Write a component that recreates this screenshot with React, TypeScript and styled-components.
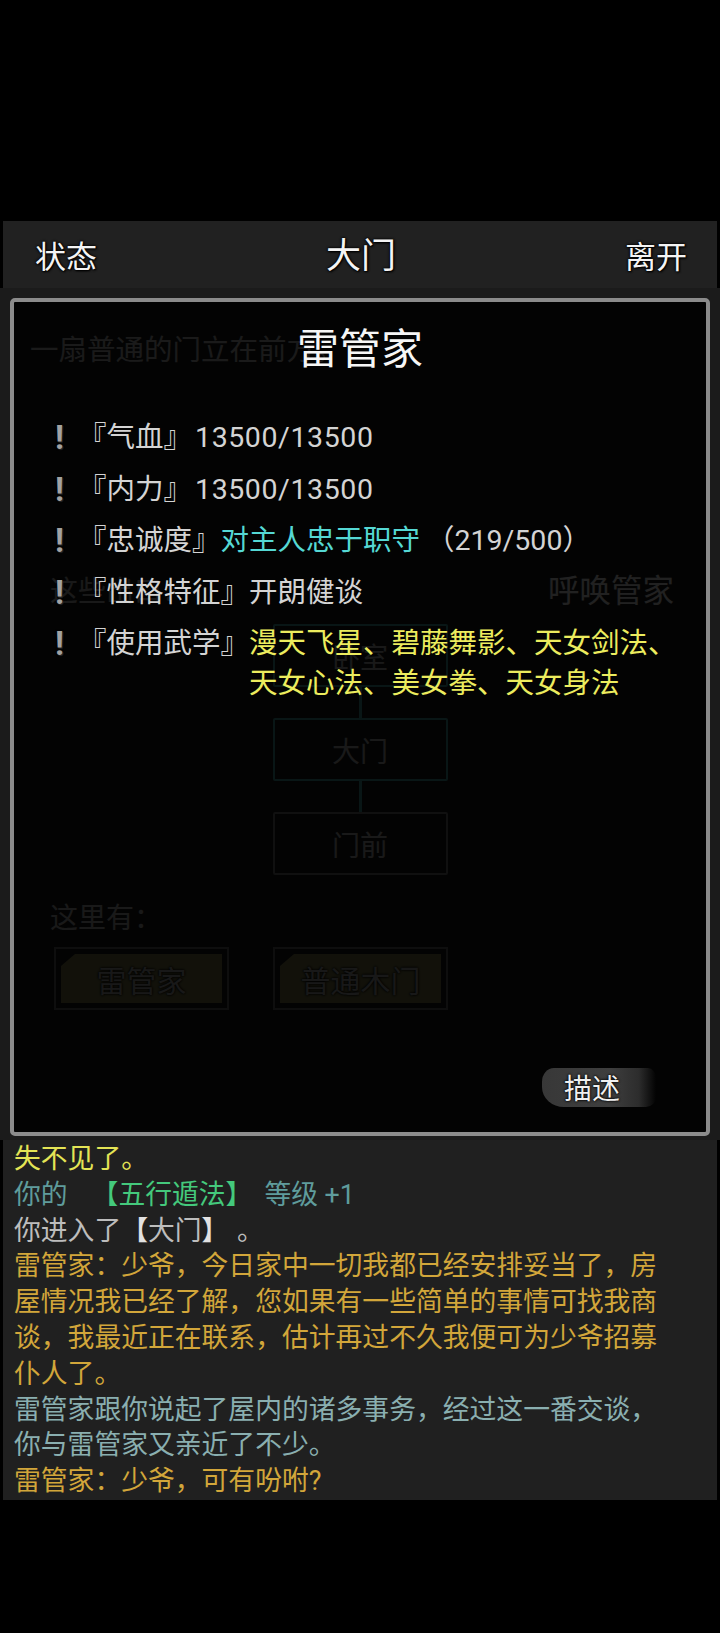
import styled, { createGlobalStyle } from "styled-components";

const GlobalStyle = createGlobalStyle`
  html, body {
    margin: 0;
    padding: 0;
    background: #000;
  }
  body {
    font-family: Roboto, "Noto Sans CJK SC", sans-serif;
  }
  * {
    box-sizing: border-box;
  }
`;

const Screen = styled.div`
  width: 720px;
  min-height: 1633px;
  padding-top: 221px;
  background: #000;
  display: flex;
  flex-direction: column;
`;

const TopBar = styled.header`
  height: 67px;
  margin: 0 3px;
  padding: 0 30px 0 32px;
  background: #212121;
  display: flex;
  align-items: center;
  justify-content: space-between;
`;

const BarText = styled.span<{ $big?: boolean }>`
  font-family: "Noto Sans CJK SC", sans-serif;
  font-size: ${(p) => (p.$big ? 35 : 31)}px;
  line-height: 1;
  color: #f4f4f4;
  margin-top: ${(p) => (p.$big ? -4 : 0)}px;
  text-shadow: 0 0 2px #000, 0 0 3px #000, 1px 1px 2px #000;
`;

/* the room page that sits under the popup */
const Scene = styled.section`
  position: relative;
  height: 852px;
  background: #1b1b1b;
  overflow: hidden;
`;

const SceneBody = styled.div`
  display: flex;
  flex-direction: column;
  padding-top: 43px;
`;

const SceneDesc = styled.p`
  margin: 0;
  padding: 0 30px;
  font-size: 28.5px;
  line-height: 40px;
  color: #c8c8c8;
`;

const ActionRow = styled.div`
  margin-top: 201px;
  padding: 0 46px 0 50px;
  display: flex;
  justify-content: space-between;
  align-items: center;
  line-height: 40px;
`;

const ActionText = styled.span<{ $size: number; $color: string }>`
  font-size: ${(p) => p.$size}px;
  color: ${(p) => p.$color};
`;

const MapColumn = styled.div`
  margin-top: 12px;
  display: flex;
  flex-direction: column;
  align-items: center;
`;

const MapRoom = styled.div<{ $current?: boolean }>`
  width: 175px;
  height: 63px;
  border: 2px solid ${(p) => (p.$current ? "#4aa8a8" : "#7a7a7a")};
  border-radius: 2px;
  display: flex;
  align-items: center;
  justify-content: center;
  font-size: 28px;
  color: #c0c0c0;
`;

const MapLink = styled.div`
  width: 3px;
  height: 31px;
  background: #4aa8a8;
`;

const HereLabel = styled.div`
  margin-top: 24px;
  padding-left: 50px;
  font-size: 28px;
  line-height: 40px;
  color: #c0c0c0;
`;

const NpcRow = styled.div`
  margin-top: 8px;
  padding-left: 54px;
  display: flex;
  gap: 44px;
`;

const NpcButton = styled.div`
  width: 175px;
  height: 63px;
  border: 2px solid #6a6a6a;
  padding: 5px;
  display: flex;
`;

const NpcTile = styled.div`
  flex: 1;
  background: #8a8650;
  clip-path: polygon(14px 0, 100% 0, 100% 100%, 0 100%, 0 12px);
  display: flex;
  align-items: center;
  justify-content: center;
  font-size: 30px;
  color: #b8b8b8;
  text-shadow: 0 0 3px #000, 0 0 2px #000;
`;

/* popup */
const Popup = styled.div`
  position: absolute;
  top: 10px;
  left: 10px;
  right: 10px;
  bottom: 4px;
  border: 4px solid #8b8b8b;
  border-radius: 5px;
  background: rgba(0, 0, 0, 0.87);
  padding: 23px 0 25px;
  display: flex;
  flex-direction: column;
`;

const PopupTitle = styled.h2`
  margin: 0 0 44px;
  text-align: center;
  font-size: 42px;
  line-height: 49px;
  font-weight: 400;
  color: #f6f6f6;
`;

const StatList = styled.div`
  padding: 0 25px 0 32px;
  display: flex;
  flex-direction: column;
  gap: 12px;
`;

const StatRow = styled.div`
  display: flex;
  font-size: 28.5px;
  line-height: 39.5px;
  color: #d4d4d4;
`;

const Bang = styled.span`
  width: 32px;
  flex-shrink: 0;
  padding-left: 9px;
  font-size: 33px;
  font-weight: 700;
  color: #a2a2a2;
  text-shadow: 0 0 2px #000, 1px 1px 1px #333;
`;

const StatLabel = styled.span`
  white-space: nowrap;
  flex-shrink: 0;
`;

const StatValue = styled.span<{ $color?: string }>`
  flex: 1;
  color: ${(p) => p.$color ?? "#d4d4d4"};
`;

const Num = styled.span`
  letter-spacing: 0.6px;
  margin-left: 3px;
`;

const Muted = styled.span`
  color: #d4d4d4;
  margin-left: 6px;
`;

const BrushButton = styled.button`
  margin-top: auto;
  margin-right: 50px;
  align-self: flex-end;
  width: 114px;
  height: 39px;
  border: 0;
  border-radius: 12px 8px 10px 22px / 14px 10px 10px 20px;
  background: linear-gradient(
    90deg,
    #383838 0%,
    #3e3e3e 60%,
    rgba(62, 62, 62, 0.7) 85%,
    rgba(60, 60, 60, 0) 100%
  );
  padding: 0 0 0 22px;
  text-align: left;
  font-family: "Noto Sans CJK SC", sans-serif;
  font-size: 28px;
  line-height: 39px;
  color: #f0f0f0;
  text-shadow: 0 0 2px #000, 0 0 3px #000;
`;

/* message log */
const LogPanel = styled.section`
  margin: 0 3px;
  height: 360px;
  background: #202020;
  padding: 0 47px 0 11px;
  overflow: hidden;
  display: flex;
  flex-direction: column;
  justify-content: flex-end;
  font-size: 26.8px;
  line-height: 35.8px;
`;

const LogLine = styled.div<{ $color: string }>`
  color: ${(p) => p.$color};
`;

const Tint = styled.span<{ $color: string; $bold?: boolean; $gap?: number }>`
  color: ${(p) => p.$color};
  font-weight: ${(p) => (p.$bold ? 700 : 400)};
  margin-left: ${(p) => p.$gap ?? 0}px;
`;

const skills = "漫天飞星、碧藤舞影、天女剑法、天女心法、美女拳、天女身法";

export default function App() {
  return (
    <>
      <GlobalStyle />
      <Screen>
        <TopBar>
          <BarText>状态</BarText>
          <BarText $big>大门</BarText>
          <BarText>离开</BarText>
        </TopBar>

        <Scene>
          <SceneBody>
            <SceneDesc>一扇普通的门立在前方。</SceneDesc>
            <ActionRow>
              <ActionText $size={28} $color="#c0c0c0">这些出口：</ActionText>
              <ActionText $size={31.5} $color="#ffffff">呼唤管家</ActionText>
            </ActionRow>
            <MapColumn>
              <MapRoom $current>卧室</MapRoom>
              <MapLink />
              <MapRoom $current>大门</MapRoom>
              <MapLink />
              <MapRoom>门前</MapRoom>
            </MapColumn>
            <HereLabel>这里有：</HereLabel>
            <NpcRow>
              <NpcButton>
                <NpcTile>雷管家</NpcTile>
              </NpcButton>
              <NpcButton>
                <NpcTile>普通木门</NpcTile>
              </NpcButton>
            </NpcRow>
          </SceneBody>

          <Popup>
            <PopupTitle>雷管家</PopupTitle>
            <StatList>
              <StatRow>
                <Bang>!</Bang>
                <StatLabel>『气血』</StatLabel>
                <StatValue>
                  <Num>13500/13500</Num>
                </StatValue>
              </StatRow>
              <StatRow>
                <Bang>!</Bang>
                <StatLabel>『内力』</StatLabel>
                <StatValue>
                  <Num>13500/13500</Num>
                </StatValue>
              </StatRow>
              <StatRow>
                <Bang>!</Bang>
                <StatLabel>『忠诚度』</StatLabel>
                <StatValue $color="#55d8d4">
                  对主人忠于职守<Muted>（219/500）</Muted>
                </StatValue>
              </StatRow>
              <StatRow>
                <Bang>!</Bang>
                <StatLabel>『性格特征』</StatLabel>
                <StatValue>开朗健谈</StatValue>
              </StatRow>
              <StatRow>
                <Bang>!</Bang>
                <StatLabel>『使用武学』</StatLabel>
                <StatValue $color="#ecec5e">{skills}</StatValue>
              </StatRow>
            </StatList>
            <BrushButton>描述</BrushButton>
          </Popup>
        </Scene>

        <LogPanel>
          <LogLine $color="#e4e455">失不见了。</LogLine>
          <LogLine $color="#5f9c9c">
            你的<Tint $color="#44c97c" $gap={24}>【五行遁法】</Tint>
            <Tint $color="#5f9c9c" $gap={12}>等级 +1</Tint>
          </LogLine>
          <LogLine $color="#bdbdbd">
            你进入了<Tint $color="#e2e2e2" $bold>【</Tint>大门
            <Tint $color="#e2e2e2" $bold>】</Tint>
            <Tint $color="#bdbdbd" $gap={22}>。</Tint>
          </LogLine>
          <LogLine $color="#d2a63a">
            雷管家：少爷，今日家中一切我都已经安排妥当了，房屋情况我已经了解，您如果有一些简单的事情可找我商谈，我最近正在联系，估计再过不久我便可为少爷招募仆人了。
          </LogLine>
          <LogLine $color="#8aafb0">
            雷管家跟你说起了屋内的诸多事务，经过这一番交谈，你与雷管家又亲近了不少。
          </LogLine>
          <LogLine $color="#d2a63a">雷管家：少爷，可有吩咐?</LogLine>
        </LogPanel>
      </Screen>
    </>
  );
}
